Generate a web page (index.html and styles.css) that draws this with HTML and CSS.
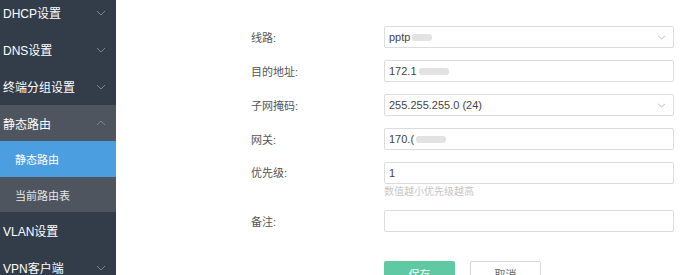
FILE: index.html
```html
<!DOCTYPE html>
<html lang="zh-CN">
<head>
    <meta charset="UTF-8">
    <title>静态路由</title>
    <link rel="stylesheet" href="styles.css">
</head>
<body>

    <div class="layout">
        <aside class="sidebar">
            <div class="menu-item first">
                <span>DHCP设置</span>
                <svg class="arrow" viewBox="0 0 10 6"><path d="M1 1l4 4 4-4"/></svg>
            </div>
            <div class="menu-item">
                <span>DNS设置</span>
                <svg class="arrow" viewBox="0 0 10 6"><path d="M1 1l4 4 4-4"/></svg>
            </div>
            <div class="menu-item">
                <span>终端分组设置</span>
                <svg class="arrow" viewBox="0 0 10 6"><path d="M1 1l4 4 4-4"/></svg>
            </div>
            <div class="menu-group">
                <div class="menu-item open">
                    <span>静态路由</span>
                    <svg class="arrow" viewBox="0 0 10 6"><path d="M1 5l4-4 4 4"/></svg>
                </div>
                <div class="sub-item active">静态路由</div>
                <div class="sub-item">当前路由表</div>
            </div>
            <div class="menu-item">
                <span>VLAN设置</span>
            </div>
            <div class="menu-item">
                <span>VPN客户端</span>
                <svg class="arrow" viewBox="0 0 10 6"><path d="M1 1l4 4 4-4"/></svg>
            </div>
        </aside>

        <main class="content">
            <form class="route-form">
                <div class="form-row">
                    <label>线路:</label>
                    <div class="field select">
                        <span>pptp<i class="blur short"></i></span>
                        <svg class="arrow" viewBox="0 0 10 6"><path d="M1 1l4 4 4-4"/></svg>
                    </div>
                </div>
                <div class="form-row">
                    <label>目的地址:</label>
                    <div class="field"><span>172.1<i class="blur"></i></span></div>
                </div>
                <div class="form-row">
                    <label>子网掩码:</label>
                    <div class="field select">
                        <span>255.255.255.0 (24)</span>
                        <svg class="arrow" viewBox="0 0 10 6"><path d="M1 1l4 4 4-4"/></svg>
                    </div>
                </div>
                <div class="form-row">
                    <label>网关:</label>
                    <div class="field"><span>170.(<i class="blur"></i></span></div>
                </div>
                <div class="form-row has-hint">
                    <label>优先级:</label>
                    <div class="field-wrap">
                        <div class="field"><span>1</span></div>
                        <div class="hint">数值越小优先级越高</div>
                    </div>
                </div>
                <div class="form-row">
                    <label>备注:</label>
                    <div class="field"></div>
                </div>
                <div class="form-actions">
                    <button type="button" class="btn btn-save">保存</button>
                    <button type="button" class="btn btn-cancel">取消</button>
                </div>
            </form>
        </main>
    </div>

</body>
</html>
```

FILE: styles.css
```css
/* Page layout */
body {
    font-family: "Liberation Sans", "Noto Sans CJK SC", sans-serif;
    background-color: #fff;
    margin: 0;
    padding: 0;
    overflow: hidden;
}

.layout {
    display: flex;
    height: 275px;
}

/* Sidebar menu */
.sidebar {
    width: 116px;
    flex-shrink: 0;
    background-color: #333d4a;
    color: #fff;
    font-size: 12px;
}

.menu-item {
    display: flex;
    align-items: center;
    justify-content: space-between;
    height: 37px;
    padding: 0 10px 0 3px;
}

.menu-item.first {
    margin-top: -6px;
}

.menu-item .arrow {
    width: 10px;
    height: 6px;
    fill: none;
    stroke: #7b8591;
    stroke-width: 1;
}

.menu-group {
    background-color: #4e555e;
}

.menu-group .menu-item {
    height: 36px;
}

.sub-item {
    display: flex;
    align-items: center;
    height: 36px;
    padding-left: 15px;
    font-size: 11px;
    color: #e6e8ea;
}

.sub-item:last-child {
    height: 35px;
}

.sub-item.active {
    background-color: #4b9fe1;
    color: #fff;
}

/* Form area */
.content {
    flex: 1;
    padding-left: 135px;
    padding-top: 26px;
}

.route-form {
    display: flex;
    flex-direction: column;
    gap: 12px;
}

.form-row {
    display: flex;
    align-items: center;
}

.form-row.has-hint {
    align-items: flex-start;
}

.form-row.has-hint label {
    line-height: 22px;
}

.form-row label {
    width: 133px;
    font-size: 11px;
    color: #555;
}

.field-wrap {
    display: flex;
    flex-direction: column;
}

.field {
    box-sizing: border-box;
    width: 290px;
    height: 22px;
    border: 1px solid #dcdcdc;
    border-radius: 2px;
    display: flex;
    align-items: center;
    justify-content: space-between;
    padding: 0 7px 0 4px;
    font-size: 11px;
    color: #444;
}

.field span {
    display: flex;
    align-items: center;
}

.field .arrow {
    width: 9px;
    height: 5px;
    fill: none;
    stroke: #aaa;
    stroke-width: 1;
}

/* blurred part of the address */
.blur {
    display: inline-block;
    width: 30px;
    height: 7px;
    margin-left: 2px;
    border-radius: 3px;
    background-color: #e2e2e2;
}

.blur.short {
    width: 20px;
}

.hint {
    height: 14px;
    line-height: 16px;
    font-size: 10px;
    color: #c6c6c6;
}

.form-actions {
    display: flex;
    gap: 15px;
    margin-left: 133px;
    margin-top: 17px;
}

.btn {
    width: 71px;
    height: 26px;
    border-radius: 2px;
    font-size: 11px;
    font-family: inherit;
    cursor: pointer;
}

.btn-save {
    background-color: #5ec9a3;
    border: none;
    color: #fff;
}

.btn-cancel {
    background-color: #fff;
    border: 1px solid #d6d6d6;
    color: #666;
}
```
